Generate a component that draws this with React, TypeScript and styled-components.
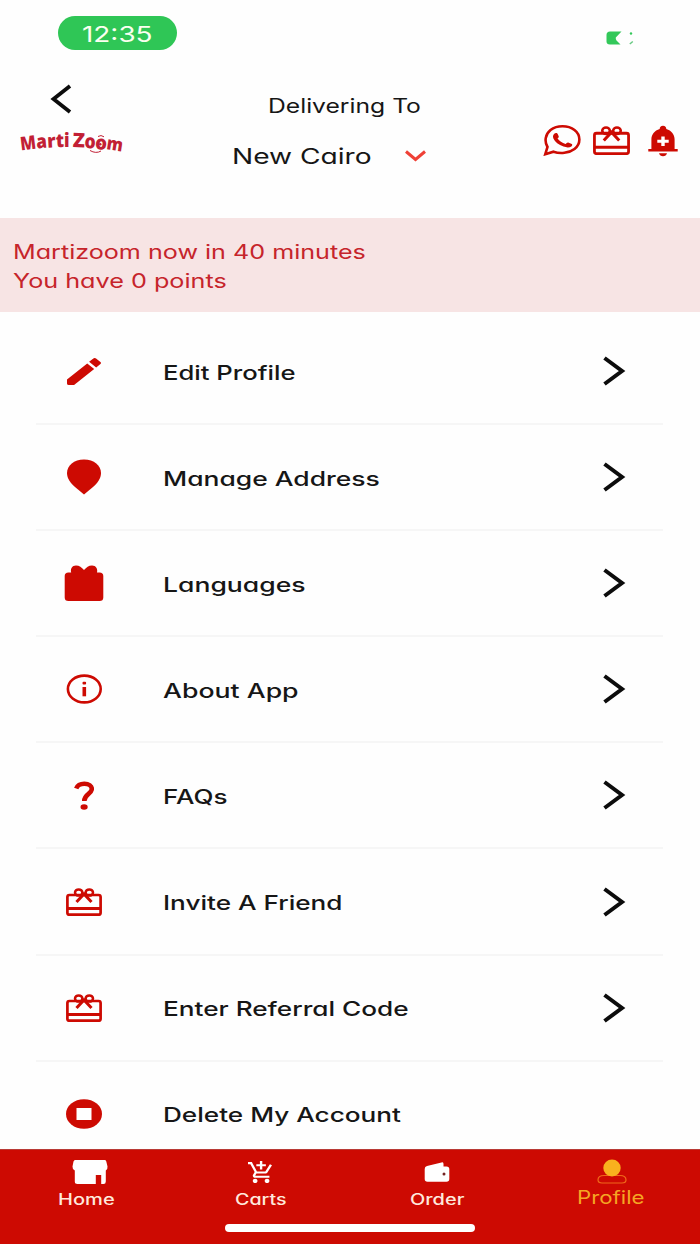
import React, { useLayoutEffect, useRef, useState } from "react";
import styled, { createGlobalStyle } from "styled-components";

const RED = "#cd0a02";

const GlobalStyle = createGlobalStyle`
  * { box-sizing: border-box; }
  body {
    margin: 0;
    background: #fefefe;
    font-family: Inter, "Open Sans", sans-serif;
    font-feature-settings: "cv11" 1;
    color: #161616;
  }
`;

const Screen = styled.div`
  width: 700px;
  height: 1244px;
  display: flex;
  flex-direction: column;
  overflow: hidden;
`;

const StatusBar = styled.div`
  flex: none;
  height: 66px;
  display: flex;
  justify-content: space-between;
  align-items: flex-start;
  padding: 16px 66px 0 58px;
`;

const TimePill = styled.div`
  width: 119px;
  height: 34px;
  border-radius: 17px;
  background: #2fc656;
  color: #fbfff0;
  padding: 1px 0 0 24px;
`;

const BatterySlot = styled.div`
  padding-top: 15px;
  line-height: 0;
`;

const Header = styled.header`
  flex: none;
  height: 152px;
  display: grid;
  grid-template-columns: 232px 1fr 157px;
`;

const Brand = styled.div`
  display: flex;
  flex-direction: column;
  align-items: flex-start;
  padding: 18px 0 0 18px;
  gap: 10px;
`;

const BackButton = styled.button`
  margin: 0 0 0 32px;
  padding: 0;
  border: 0;
  background: none;
  height: 30px;
  line-height: 0;
`;

const Destination = styled.div`
  display: flex;
  flex-direction: column;
`;

const DeliveringLine = styled.div`
  padding: 23px 0 0 36px;
`;

const CityLine = styled.div`
  display: flex;
  align-items: center;
  gap: 33px;
  padding-top: 16px;
`;

const HeaderActions = styled.div`
  display: flex;
  align-items: center;
  height: 34px;
  margin-top: 57px;
  gap: 12px;
`;

const Banner = styled.section`
  flex: none;
  height: 94px;
  background: #f7e4e4;
  color: #c6242b;
  padding: 19px 13px 0;
`;

const Menu = styled.ul`
  flex: 1;
  min-height: 0;
  overflow: hidden;
  list-style: none;
  margin: 0;
  padding: 7px 37px 0 36px;
`;

const MenuRow = styled.li`
  height: 106.1px;
  display: grid;
  grid-template-columns: 96px 1fr 24px;
  column-gap: 31px;
  align-items: center;
  padding-right: 37px;
  border-bottom: 2px solid #f6f6f6;
`;

const MenuLabel = styled.div`
  padding-top: 3px;
`;

const IconCell = styled.div`
  display: flex;
  justify-content: center;
  line-height: 0;
`;

const Chevron = styled.svg`
  width: 24px;
  height: 32px;
`;

const NavBar = styled.nav`
  flex: none;
  height: 95px;
  background: ${RED};
  border-top: 1px solid #b93a35;
  display: flex;
  flex-direction: column;
  align-items: center;
`;

const Tabs = styled.div`
  width: 100%;
  height: 74px;
  display: grid;
  grid-template-columns: 173px 175px 177px 1fr;
`;

const Tab = styled.div<{ $active?: boolean }>`
  display: flex;
  flex-direction: column;
  align-items: center;
  color: ${(p) => (p.$active ? "#f5a623" : "#ffe9dc")};
  padding-top: 8px;
  padding-right: ${(p) => (p.$active ? "3px" : "0")};
`;

const TabIcon = styled.div<{ $shift?: number }>`
  height: 28px;
  display: flex;
  align-items: center;
  line-height: 0;
  padding-left: ${(p) => p.$shift ?? 0}px;
`;

const BellSlot = styled.div`
  padding: 1px 0 0 6px;
`;

const TabLabel = styled.div<{ $drop?: number }>`
  padding-top: ${(p) => p.$drop ?? 2}px;
`;

const HomeIndicator = styled.div`
  width: 250px;
  height: 8px;
  border-radius: 4px;
  background: #fff;
`;

const Glyph = styled.svg<{ $w: number; $h: number }>`
  display: block;
  flex: none;
  width: ${(p) => p.$w}px;
  height: ${(p) => p.$h}px;
`;

const LineBox = styled.div<{ $w: number; $h: number }>`
  flex: none;
  width: ${(p) => p.$w}px;
  height: ${(p) => p.$h}px;
  white-space: nowrap;
`;

const LineText = styled.span<{ $size: number; $h: number; $weight: number }>`
  display: inline-block;
  transform-origin: 0 50%;
  font-size: ${(p) => p.$size}px;
  font-weight: ${(p) => p.$weight};
  line-height: ${(p) => p.$h}px;
`;

type LineProps = { w: number; size: number; h: number; weight?: number; children: string };

/* One line of text set wide: its letters are extended to fill the given width. */
function WideLine({ w, size, h, weight = 400, children }: LineProps) {
  const ref = useRef<HTMLSpanElement>(null);
  const [scale, setScale] = useState(1);
  useLayoutEffect(() => {
    if (ref.current) setScale(w / ref.current.offsetWidth);
  }, [w, children]);
  return (
    <LineBox $w={w} $h={h}>
      <LineText ref={ref} $size={size} $h={h} $weight={weight} style={{ transform: `scaleX(${scale})` }}>
        {children}
      </LineText>
    </LineBox>
  );
}

const GiftCardIcon = ({ w = 36, h = 28 }: { w?: number; h?: number }) => (
  <Glyph $w={w} $h={h} viewBox="0 0 36 28" preserveAspectRatio="none" fill="none" stroke={RED} strokeWidth="2.700">
    <rect x="1.400" y="7" width="33.200" height="19.700" rx="2" />
    <path d="M1.400 20.500H34.600" strokeWidth="3" />
    <ellipse cx="12.700" cy="4.500" rx="3.700" ry="3.100" strokeWidth="2.500" />
    <ellipse cx="23.300" cy="4.500" rx="3.700" ry="3.100" strokeWidth="2.500" />
    <path d="M10.500 14L18 6L25.500 14" strokeWidth="3" />
  </Glyph>
);

const PencilIcon = () => (
  <Glyph $w={34} $h={27} viewBox="3 3 18 18" preserveAspectRatio="none" fill={RED}>
    <path d="M3 17.250V20Q3 21 4 21H6.750L17.400 10.300L13.700 6.600L3 17.250zM20.710 7.040c.39-.39.39-1.020 0-1.410l-2.340-2.340c-.39-.39-1.020-.39-1.410 0L14.700 5.550l3.750 3.750 2.260-2.260z" />
  </Glyph>
);

const PinIcon = () => (
  <Glyph $w={36} $h={36} viewBox="0 0 36 36" fill={RED}>
    <path d="M18 0.500C8 .5 1 6.500 1 14C1 19.500 4.500 24 9 28L18 35.500L27 28C31.500 24 35 19.500 35 14C35 6.500 28 .5 18 .5z" />
  </Glyph>
);

const PresentIcon = () => (
  <Glyph $w={40} $h={38} viewBox="0 0 40 38" fill={RED}>
    <path d="M4.500 8.500H7.200C6.200 5 8 1.500 12 1.500C15.500 1.500 17.500 3.500 20 6C22.500 3.500 24.500 1.500 28 1.500C32 1.500 34 5 33 8.500H35.500Q39.300 8.500 39.300 12V33.500Q39.300 37 35.500 37H4.500Q.7 37 .7 33.500V12Q.7 8.500 4.500 8.500z" />
  </Glyph>
);

const InfoIcon = () => (
  <Glyph $w={36} $h={30} viewBox="0 0 36 30">
    <ellipse cx="18.300" cy="15" rx="16.400" ry="13.400" fill="none" stroke={RED} strokeWidth="2.600" />
    <rect x="16.500" y="7.800" width="3.600" height="2.800" rx="1" fill={RED} />
    <rect x="16.500" y="13" width="3.600" height="9.300" fill={RED} />
  </Glyph>
);

const QuestionIcon = () => (
  <Glyph $w={20} $h={29} viewBox="0 0 20 29">
    <path d="M2.200 7.500C3.600 4 6.400 2.800 10.300 2.800C15 2.800 17.800 5 17.800 8C17.800 13 10.300 13 10.300 20" fill="none" stroke={RED} strokeWidth="4.600" />
    <ellipse cx="10.100" cy="26" rx="3.600" ry="2.800" fill={RED} />
  </Glyph>
);

const StopIcon = () => (
  <Glyph $w={36} $h={30} viewBox="0 0 36 30">
    <ellipse cx="18" cy="15" rx="18" ry="14.700" fill={RED} />
    <rect x="10.500" y="9" width="15" height="12" fill="#fff" />
  </Glyph>
);

const WhatsAppIcon = () => (
  <Glyph $w={38} $h={32} viewBox="0 0 38 32" fill="none">
    <path d="M2.300 30.200L4.500 23C1.300 17.500 2 10.500 7.500 6C14 1 25 1 31.500 6C38 11 38 20 31.500 25C26 29.300 17 30 10.500 27.700L2.300 30.200z" stroke={RED} strokeWidth="2.600" strokeLinejoin="miter" />
    <path d="M12.800 9C13.600 8.800 14.400 9.300 14.800 10.200L15.700 12.300C16 13.200 15.300 13.900 14.500 14.500C16.300 17 19.200 18.900 22.500 20.100C23.300 19.500 24.100 18.300 25.200 18.500L28.800 19.900C29.700 20.400 29.100 21.900 28.300 22.500C26.500 23.700 23.500 23.700 20.500 22.600C15.600 20.800 12 17.900 10.400 14.500C9.400 12.300 10.200 9.600 12.800 9z" fill={RED} />
  </Glyph>
);

const BellPlusIcon = () => (
  <Glyph $w={30} $h={32} viewBox="0 0 30 32" fill={RED}>
    <path d="M15 .7C17.200 .7 18.300 2 18.300 4C23.500 5.500 26.600 9.500 26.600 14.500V24H29.700V26.500H.3V24H3.400V14.500C3.400 9.500 6.500 5.500 11.700 4C11.700 2 12.800 .7 15 .7z" />
    <path d="M11 28.300H19C18.500 30.300 17 31.200 15 31.200C13 31.200 11.500 30.300 11 28.300z" />
    <path d="M13.300 11.500H16.700V14.800H20.700V17.700H16.700V21H13.300V17.700H9.300V14.800H13.300z" fill="#fff" />
  </Glyph>
);

const BatteryIcon = () => (
  <Glyph $w={28} $h={15} viewBox="0 0 28 15" fill="#33c85a">
    <path d="M4 .5H15.500L9.800 6.500Q9.500 8 10.500 9.500L14.500 13.500H4Q.5 13.500 .5 10.500V4Q.5 .5 4 .5z" />
    <circle cx="25" cy="2.500" r="1.200" />
    <path d="M26.800 10.500L23.800 13" stroke="#67c982" strokeWidth="1.500" />
  </Glyph>
);

const LogoText = styled.text`
  font-family: "Open Sans", "Noto Sans", sans-serif;
  font-weight: 800;
  fill: #c21f35;
`;

/* letter, x, baseline y, angle, size, horizontal stretch */
const logoLetters: [string, number, number, number, number, number][] = [
  ["M", 3, 24.500, -7, 19, 0.860],
  ["a", 18.800, 22.600, -5, 19, 0.900],
  ["r", 29.500, 21.700, -3, 19, 0.950],
  ["t", 38, 21.200, -2, 19, 0.950],
  ["i", 46, 20.800, 0, 19, 0.900],
  ["Z", 54.500, 21, 2, 20, 1],
  ["o", 66.300, 22, 3, 19.500, 0.900],
  ["o", 76.800, 23, 5, 19.500, 0.950],
  ["m", 88, 23, 9, 18, 0.900],
];

const Logo = () => (
  <Glyph $w={112} $h={34} viewBox="0 -2 112 34" role="img" aria-label="Marti Zoom">
    {logoLetters.map(([ch, x, y, angle, size, sx], i) => (
      <LogoText key={i} fontSize={size} transform={`translate(${x} ${y}) rotate(${angle}) scale(${sx} 1)`}>
        {ch}
      </LogoText>
    ))}
    <circle cx="82.300" cy="18.300" r="1.200" fill="#c21f35" />
    <path d="M80 10.500Q83 8.500 86 10.800M72 24.500Q78 28 83 25" fill="none" stroke="#c21f35" strokeWidth="1" />
  </Glyph>
);

const StoreIcon = () => (
  <Glyph $w={36} $h={26} viewBox="0 0 36 26" fill="#fff">
    <path d="M3 1H33Q34 1 34.300 2.500L35.500 7.500Q35.800 10.500 33.800 11.500V22.500Q33.800 25 31.500 25H29.200V16H23.800V25H5.500Q2.800 25 2.800 22.500V11.500Q.3 10.500 .5 7.500L1.500 2.500Q2 1 3 1z" />
  </Glyph>
);

const CartIcon = () => (
  <Glyph $w={25} $h={22} viewBox="1 1 21 21" preserveAspectRatio="none" fill="#fff">
    <path d="M11 9h2V6h3V4h-3V1h-2v3H8v2h3v3zm-4 9c-1.100 0-1.990.9-1.990 2S5.900 22 7 22s2-.9 2-2-.9-2-2-2zm10 0c-1.100 0-1.990.9-1.990 2s.89 2 1.990 2 2-.9 2-2-.9-2-2-2zm-9.830-3.250l.03-.12.9-1.630h7.450c.75 0 1.410-.41 1.750-1.030l3.860-7.010L19.420 4h-.01l-1.100 2-2.760 5H8.530l-.13-.27L6.160 6l-.95-2-.94-2H1v2h2l3.600 7.590-1.350 2.450c-.16.28-.25.61-.25.96 0 1.100.9 2 2 2h12v-2H7.420c-.13 0-.25-.11-.25-.25z" />
  </Glyph>
);

const WalletIcon = () => (
  <Glyph $w={26} $h={20} viewBox="0 0 26 20">
    <path d="M3 4L17.500 .4Q19.300 0 19.500 1.800V4.500H22.500Q25.300 4.500 25.300 7V17Q25.300 19.700 22.500 19.700H3.500Q.7 19.700 .7 17V7Q.7 4.700 3 4z" fill="#fff" />
    <circle cx="20" cy="12" r="1.500" fill="#732322" />
  </Glyph>
);

const PersonIcon = () => (
  <Glyph $w={32} $h={26} viewBox="0 0 32 26">
    <path d="M8 16.500H24C28 16.500 30 18.500 30 21C30 23.300 28 24 26 24H6C4 24 2 23.300 2 21C2 18.500 4 16.500 8 16.500z" fill="none" stroke="#f0691a" strokeWidth="1.200" />
    <ellipse cx="16" cy="9" rx="8.700" ry="8.500" fill="#f9b11e" />
  </Glyph>
);

const menu: { label: string; w: number; icon: React.ReactNode; last?: boolean }[] = [
  { label: "Edit Profile", w: 132, icon: <PencilIcon /> },
  { label: "Manage Address", w: 217, icon: <PinIcon /> },
  { label: "Languages", w: 142, icon: <PresentIcon /> },
  { label: "About App", w: 136, icon: <InfoIcon /> },
  { label: "FAQs", w: 65, icon: <QuestionIcon /> },
  { label: "Invite A Friend", w: 179, icon: <GiftCardIcon /> },
  { label: "Enter Referral Code", w: 246, icon: <GiftCardIcon /> },
  { label: "Delete My Account", w: 238, icon: <StopIcon />, last: true },
];

export default function App() {
  return (
    <>
      <GlobalStyle />
      <Screen>
        <StatusBar>
          <TimePill>
            <WideLine w={71} size={22} h={34}>12:35</WideLine>
          </TimePill>
          <BatterySlot>
            <BatteryIcon />
          </BatterySlot>
        </StatusBar>
        <Header>
          <Brand>
            <BackButton aria-label="Back">
              <Glyph $w={22} $h={30} viewBox="0 0 22 30" fill="none" stroke="#0c0c0c" strokeWidth="3.800">
                <path d="M20 2L3.500 15L20 28" />
              </Glyph>
            </BackButton>
            <Logo />
          </Brand>
          <Destination>
            <DeliveringLine>
              <WideLine w={153} size={19.500} h={34}>Delivering To</WideLine>
            </DeliveringLine>
            <CityLine>
              <WideLine w={140} size={21.500} h={34}>New Cairo</WideLine>
              <Glyph $w={21} $h={12} viewBox="0 0 21 12" fill="none" stroke="#ef4036" strokeWidth="3">
                <path d="M1 1.500L10.500 9.500L20 1.500" />
              </Glyph>
            </CityLine>
          </Destination>
          <HeaderActions>
            <WhatsAppIcon />
            <GiftCardIcon w={37} h={29} />
            <BellSlot>
              <BellPlusIcon />
            </BellSlot>
          </HeaderActions>
        </Header>
        <Banner>
          <WideLine w={353} size={20} h={30}>Martizoom now in 40 minutes</WideLine>
          <WideLine w={214} size={20} h={29}>You have 0 points</WideLine>
        </Banner>
        <Menu>
          {menu.map((item) => (
            <MenuRow key={item.label}>
              <IconCell>{item.icon}</IconCell>
              <MenuLabel>
                <WideLine w={item.w} size={20} h={30} weight={500}>{item.label}</WideLine>
              </MenuLabel>
              {!item.last && (
                <Chevron viewBox="0 0 24 32" fill="none" stroke="#0c0c0c" strokeWidth="4">
                  <path d="M2.500 3L20 16L2.500 29" />
                </Chevron>
              )}
            </MenuRow>
          ))}
        </Menu>
        <NavBar>
          <Tabs>
            <Tab>
              <TabIcon $shift={6}><StoreIcon /></TabIcon>
              <TabLabel><WideLine w={57} size={15.500} h={24} weight={500}>Home</WideLine></TabLabel>
            </Tab>
            <Tab>
              <TabIcon><CartIcon /></TabIcon>
              <TabLabel><WideLine w={52} size={15.500} h={24} weight={500}>Carts</WideLine></TabLabel>
            </Tab>
            <Tab>
              <TabIcon $shift={1}><WalletIcon /></TabIcon>
              <TabLabel><WideLine w={54} size={15.500} h={24} weight={500}>Order</WideLine></TabLabel>
            </Tab>
            <Tab $active>
              <TabIcon $shift={2}><PersonIcon /></TabIcon>
              <TabLabel $drop={0}><WideLine w={68} size={18} h={24}>Profile</WideLine></TabLabel>
            </Tab>
          </Tabs>
          <HomeIndicator />
        </NavBar>
      </Screen>
    </>
  );
}
